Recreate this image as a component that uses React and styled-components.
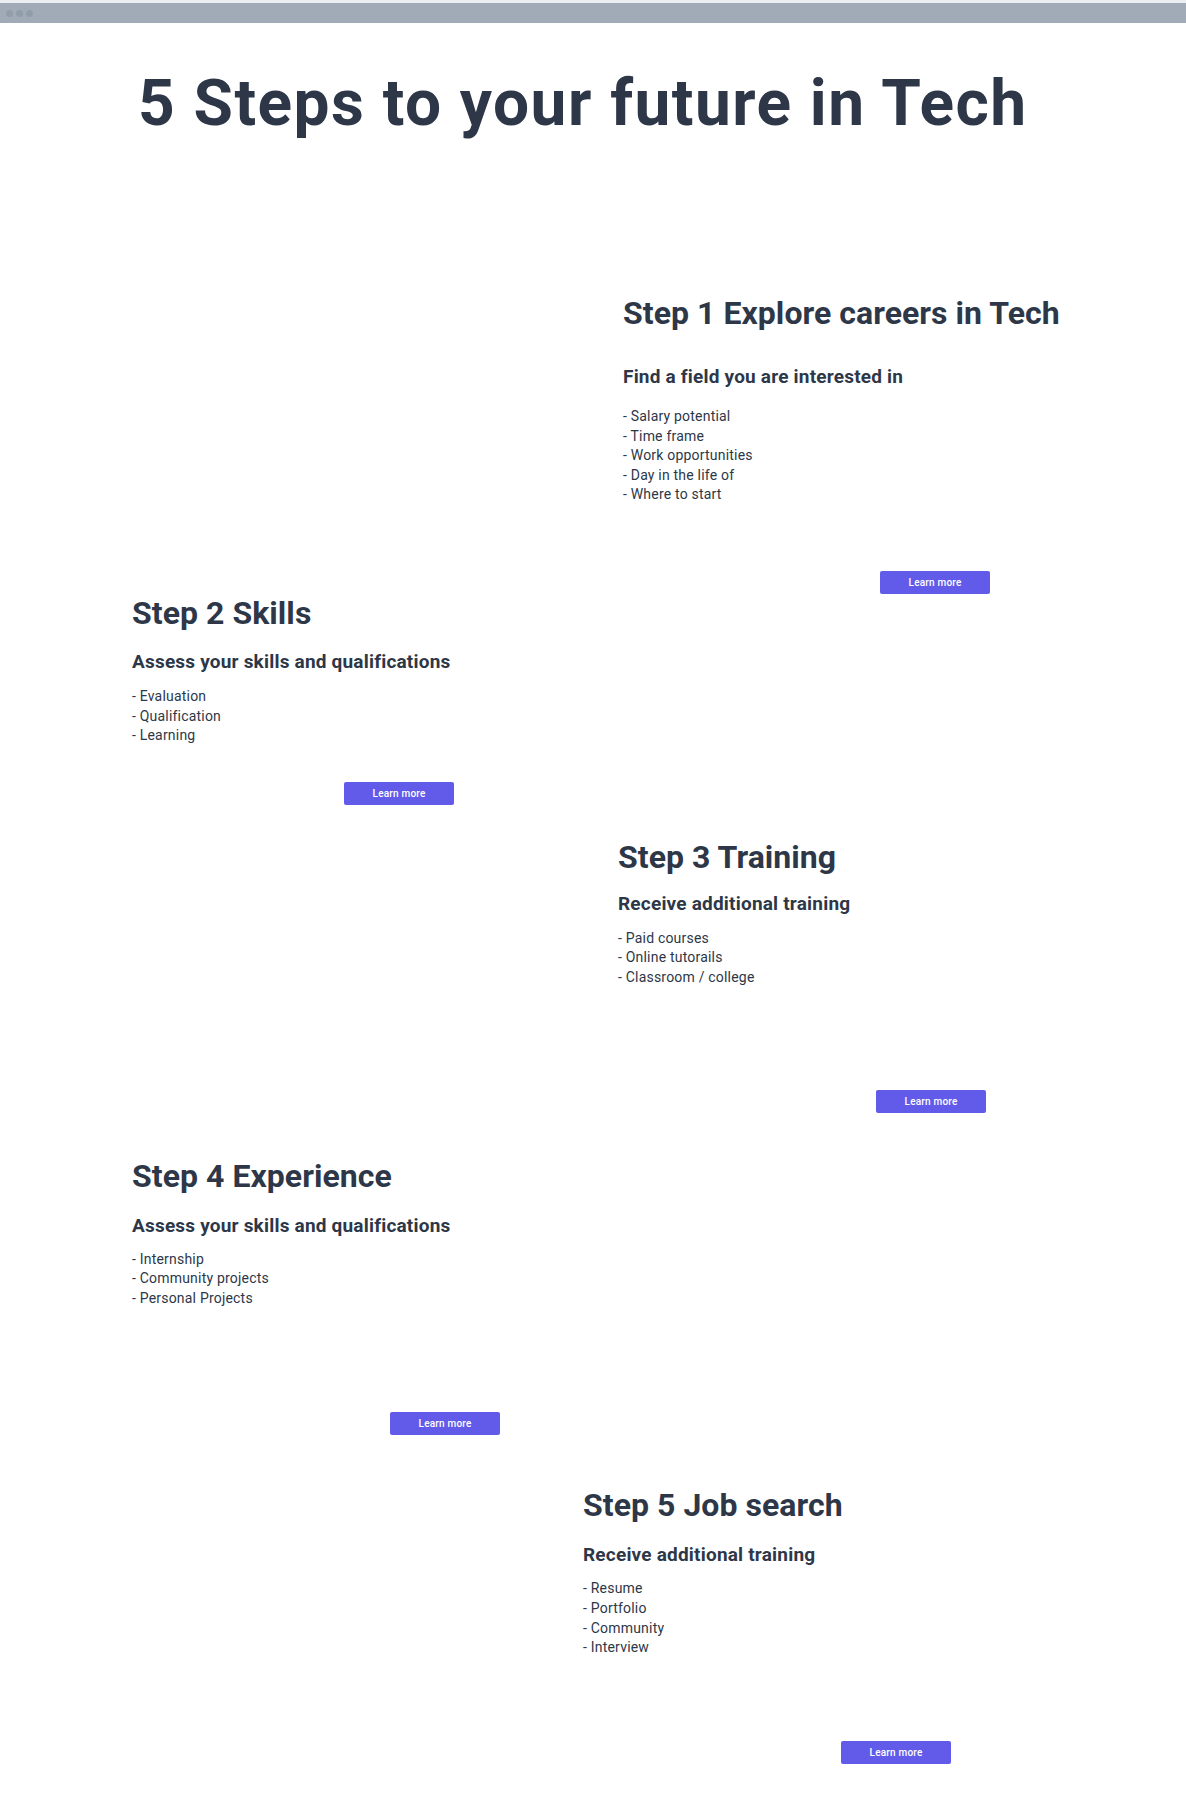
import React from "react";
import styled, { createGlobalStyle } from "styled-components";

const GlobalStyle = createGlobalStyle`
  * {
    box-sizing: border-box;
  }
  body {
    margin: 0;
    background: #ffffff;
    font-family: Roboto, "Noto Sans", "Liberation Sans", sans-serif;
    color: #2d3748;
  }
`;

const steps = [
  {
    title: "Step 1 Explore careers in Tech",
    subtitle: "Find a field you are interested in",
    items: [
      "Salary potential",
      "Time frame",
      "Work opportunities",
      "Day in the life of",
      "Where to start",
    ],
    indent: 623,
    top: 161,
    headGap: 38,
    subGap: 21,
    buttonGap: 66,
    buttonOffset: 257,
  },
  {
    title: "Step 2 Skills",
    subtitle: "Assess your skills and qualifications",
    items: ["Evaluation", "Qualification", "Learning"],
    indent: 132,
    top: 3,
    headGap: 23,
    subGap: 16,
    buttonGap: 36,
    buttonOffset: 212,
  },
  {
    title: "Step 3 Training",
    subtitle: "Receive additional training",
    items: ["Paid courses", "Online tutorails", "Classroom / college"],
    indent: 618,
    top: 36,
    headGap: 21,
    subGap: 16,
    buttonGap: 102,
    buttonOffset: 258,
  },
  {
    title: "Step 4 Experience",
    subtitle: "Assess your skills and qualifications",
    items: ["Internship", "Community projects", "Personal Projects"],
    indent: 132,
    top: 47,
    headGap: 24,
    subGap: 15,
    buttonGap: 104,
    buttonOffset: 258,
  },
  {
    title: "Step 5 Job search",
    subtitle: "Receive additional training",
    items: ["Resume", "Portfolio", "Community", "Interview"],
    indent: 583,
    top: 54,
    headGap: 24,
    subGap: 15,
    buttonGap: 83,
    buttonOffset: 258,
  },
];

const Page = styled.div`
  width: 1186px;
  min-height: 1812px;
  background: #ffffff;
`;

const WindowBar = styled.div`
  height: 23px;
  border-top: 3px solid #eceef1;
  background: #a0abb7;
  display: flex;
  align-items: center;
  gap: 3px;
  padding-left: 6px;
`;

const Dot = styled.span`
  width: 7px;
  height: 7px;
  border-radius: 50%;
  background: #929dab;
`;

const Title = styled.h1`
  margin: 49px 0 0;
  padding-left: 138px;
  font-size: 64px;
  line-height: 1;
  font-weight: 700;
  letter-spacing: 1.45px;
  color: #2d3748;
`;

const Step = styled.section`
  margin-top: ${(p) => p.$top}px;
  padding-left: ${(p) => p.$indent}px;
  display: flex;
  flex-direction: column;
  align-items: flex-start;
`;

const StepTitle = styled.h2`
  margin: 0;
  font-size: 32px;
  line-height: 1;
  font-weight: 700;
  letter-spacing: 0.05px;
  color: #2d3748;
`;

const StepSubtitle = styled.h3`
  margin: ${(p) => p.$gap}px 0 0;
  font-size: 19px;
  line-height: 1;
  font-weight: 700;
  letter-spacing: 0.2px;
  color: #2d3748;
`;

const List = styled.ul`
  margin: ${(p) => p.$gap}px 0 0;
  padding: 0;
  list-style: none;
`;

const Item = styled.li`
  font-size: 14px;
  line-height: 19.6px;
  color: #2d3748;
  letter-spacing: 0.2px;
`;

const Button = styled.button`
  margin-top: ${(p) => p.$gap}px;
  margin-left: ${(p) => p.$offset}px;
  width: 110px;
  height: 23px;
  padding: 0;
  border: none;
  border-radius: 2px;
  background: #625ae9;
  color: #ffffff;
  font-family: Roboto, "Noto Sans", sans-serif;
  font-size: 10px;
  font-weight: 500;
  letter-spacing: 0.2px;
  cursor: pointer;
`;

const App = () => {
  return (
    <>
      <GlobalStyle />
      <Page>
        <WindowBar>
          <Dot />
          <Dot />
          <Dot />
        </WindowBar>
        <Title>5 Steps to your future in Tech</Title>
        {steps.map((step) => (
          <Step key={step.title} $top={step.top} $indent={step.indent}>
            <StepTitle>{step.title}</StepTitle>
            <StepSubtitle $gap={step.headGap}>{step.subtitle}</StepSubtitle>
            <List $gap={step.subGap}>
              {step.items.map((item) => (
                <Item key={item}>- {item}</Item>
              ))}
            </List>
            <Button $gap={step.buttonGap} $offset={step.buttonOffset}>
              Learn more
            </Button>
          </Step>
        ))}
      </Page>
    </>
  );
};

export default App;
